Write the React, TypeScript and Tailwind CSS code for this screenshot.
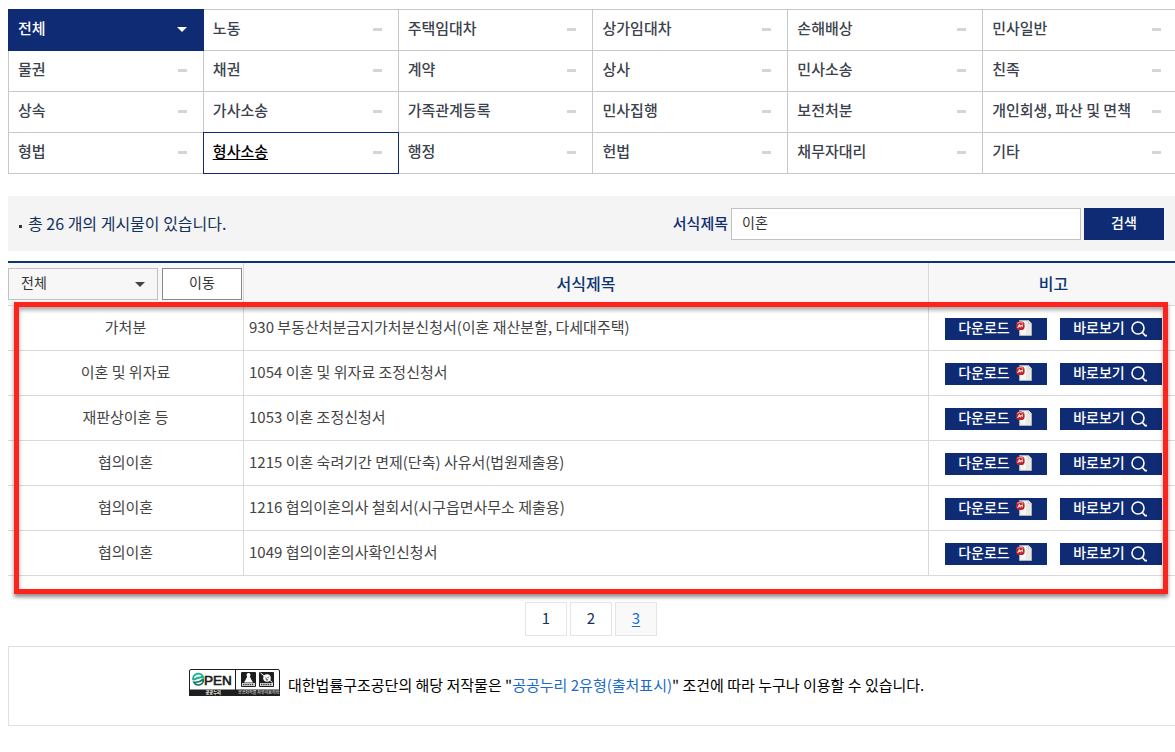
import { useState } from "react";

type FormRow = { category: string; title: string };

const categories = [
  "전체", "노동", "주택임대차", "상가임대차", "손해배상", "민사일반",
  "물권", "채권", "계약", "상사", "민사소송", "친족",
  "상속", "가사소송", "가족관계등록", "민사집행", "보전처분", "개인회생, 파산 및 면책",
  "형법", "형사소송", "행정", "헌법", "채무자대리", "기타",
];

const rows: FormRow[] = [
  { category: "가처분", title: "930 부동산처분금지가처분신청서(이혼 재산분할, 다세대주택)" },
  { category: "이혼 및 위자료", title: "1054 이혼 및 위자료 조정신청서" },
  { category: "재판상이혼 등", title: "1053 이혼 조정신청서" },
  { category: "협의이혼", title: "1215 이혼 숙려기간 면제(단축) 사유서(법원제출용)" },
  { category: "협의이혼", title: "1216 협의이혼의사 철회서(시구읍면사무소 제출용)" },
  { category: "협의이혼", title: "1049 협의이혼의사확인신청서" },
];

function Caret({ className }: { className: string }) {
  return (
    <svg viewBox="0 0 10 5" className={className} aria-hidden="true">
      <path d="M0 0h10L5 5z" fill="currentColor" />
    </svg>
  );
}

function FileIcon() {
  return (
    <svg viewBox="0 0 16 16" className="h-4 w-4" aria-hidden="true">
      <path d="M3.5.5h9l3 3v12h-12z" fill="#e9e9e6" stroke="#c3beb4" strokeWidth=".8" />
      <path d="M5 1.500h5v13H5z" fill="#f6f6f4" />
      <path d="M12.500.5v3h3z" fill="#fff" stroke="#bbb" strokeWidth=".6" />
      <rect x="0" y="1.500" width="8.600" height="8.600" rx="3.400" fill="#b9242b" />
      <path d="M1.200 3.600Q4.300.8 7.400 3.600" stroke="#dd8a8c" strokeWidth="1.300" fill="none" />
      <path d="M1.600 8 3.400 4.400 4.600 7.400M2.600 6.800l4-1.800M6.200 4.600v2.600" stroke="#fff" strokeWidth=".9" fill="none" />
    </svg>
  );
}

function SearchIcon() {
  return (
    <svg viewBox="0 0 16 16" className="h-4 w-4" fill="none" stroke="#fff" aria-hidden="true">
      <circle cx="7" cy="7" r="6" strokeWidth="1.6" />
      <path d="m11 11 3.200 3.600h1.800" strokeWidth="1.600" />
    </svg>
  );
}

function OpenLicenseMark() {
  return (
    <svg viewBox="0 0 91 27" className="h-[27px] w-[91px] shrink-0" role="img" aria-label="OPEN 공공누리">
      <rect x=".5" y=".5" width="90" height="26" rx="1.5" fill="#fff" stroke="#1e1e1e" />
      <path d="M0 20.500h91V27H0z" fill="#1e1e1e" />
      <path d="M46.500 0v21" stroke="#1e1e1e" />
      <path d="M4.300 11a5 5 0 0 1 9.800-2.500q-4.500-.8-9.800 2.500" fill="none" stroke="#12b28c" strokeWidth="2" />
      <path d="M14.300 10.200a5 5 0 0 1-9.400 3q5.500.6 9.400-3" fill="none" stroke="#15735f" strokeWidth="1.600" />
      <text x="15" y="15.800" fontFamily="Liberation Sans, sans-serif" fontSize="13.500" fill="#1e1e1e" stroke="#1e1e1e" strokeWidth=".7">PEN</text>
      <rect x="52" y="3" width="15" height="15" rx="1" fill="#1e1e1e" />
      <rect x="70" y="3" width="15" height="15" rx="1" fill="#1e1e1e" />
      <path d="M59.500 4a2 2 0 0 1 1.300 3.500l1.700 3.500 1.500 2.500h-9l1.500-2.500 1.700-3.500a2 2 0 0 1 1.300-3.500" fill="#fff" />
      <circle cx="78" cy="9" r="3.800" fill="#fff" />
      <path d="m76 7.500 2 2 2-2m-2 2V12M76.500 10h3" stroke="#1e1e1e" strokeWidth=".8" fill="none" />
      <path d="m71.500 4 12 9.500" stroke="#fff" strokeWidth="1" />
      <path d="M53 14h13v3H53zM71 14h13v3H71z" fill="#ddd" />
      <path d="M54 15.500h11M72 15.500h11" stroke="#444" strokeWidth="1.600" strokeDasharray="1.500 .7" />
      <text x="16.500" y="25.200" fontFamily="Noto Sans CJK KR, sans-serif" fontSize="4.200" fontWeight="700" fill="#fff">공공누리</text>
      <text x="49" y="25.200" fontFamily="Noto Sans CJK KR, sans-serif" fontSize="4" fill="#fff">공공저작물 자유이용허락</text>
    </svg>
  );
}

function CategoryGrid() {
  return (
    <nav aria-label="분류">
      <ul className="grid grid-cols-6 pl-px pt-px">
        {categories.map((name, i) => {
          const all = i === 0;
          const current = name === "형사소송";
          const tone = all
            ? "relative border-[#0f2b74] bg-[#0f2b74] text-white"
            : current
              ? "relative border-[#0f2b74] text-black underline underline-offset-2"
              : "border-[#c8c8c8] text-[#3b424c]";
          return (
            <li key={name} className={`-ml-px -mt-px border ${tone}`}>
              <a href="#" className="flex h-10 items-center justify-between pb-0.5 pl-[9px] pr-4 text-[15px] font-medium leading-5">
                <span className="pb-0.5">{name}</span>
                {all ? <Caret className="h-[5px] w-[10px]" /> : <span className="h-[3px] w-[9px] bg-[#d5d5d5]" />}
              </a>
            </li>
          );
        })}
      </ul>
    </nav>
  );
}

export default function App() {
  const [query, setQuery] = useState("이혼");
  const action = "flex h-[22px] w-[102px] items-center justify-center gap-1.5 bg-[#0f2b74] pr-0.5 text-[14px] font-medium leading-5 text-white";
  const page = "flex h-[34px] w-[42px] items-center justify-center border border-[#e5e5e5] pb-0.5";

  return (
    <div className="overflow-x-clip bg-white font-['Noto_Sans_CJK_KR',sans-serif]">
      <main className="-mr-[3px] pb-6 pl-2 pt-[9px]">
        <CategoryGrid />

        <form className="mt-[22px] flex h-[55px] items-center justify-between bg-[#f4f4f4] pl-[11px] pr-[14px]" onSubmit={(e) => e.preventDefault()}>
          <p className="flex items-center gap-1.5 pb-0.5 text-[16px] leading-6 text-[#13315c]">
            <span className="mt-2 h-[3px] w-[3px] bg-[#333]" />
            총 26 개의 게시물이 있습니다.
          </p>
          <div className="flex items-center">
            <label htmlFor="query" className="mr-[3px] pb-0.5 text-[15px] font-medium leading-5 text-[#0f2b74]">서식제목</label>
            <input
              id="query"
              value={query}
              onChange={(e) => setQuery(e.target.value)}
              className="mr-[3px] h-8 w-[350px] border border-[#c2c2c2] bg-white pb-1 pl-2.5 text-[14px] text-[#333] outline-none"
            />
            <button className="h-8 w-20 bg-[#0f2b74] pb-1 text-[14px] font-medium leading-5 text-white">검색</button>
          </div>
        </form>

        <div className="relative mt-2.5">
          <table className="w-full table-fixed border-separate border-spacing-0 border-t-2 border-[#0d3572] text-[15px] leading-5 text-[#444]">
            <colgroup>
              <col className="w-[236px]" />
              <col />
              <col className="w-[249px]" />
            </colgroup>
            <thead>
              <tr className="h-[43px] bg-[#f7f7f7] text-[16px] text-[#0d3572]">
                <th className="border-b border-r border-[#d9d9d9] p-0 font-normal">
                  <div className="flex gap-1 text-[14px] leading-5 text-[#333]">
                    <div className="relative">
                      <select aria-label="분류 선택" className="h-8 w-[150px] appearance-none border border-[#c2c2c2] bg-[#f7f7f7] pb-1 pl-3 leading-6 outline-none">
                        <option>전체</option>
                      </select>
                      <Caret className="pointer-events-none absolute right-[13px] top-3.5 h-[5px] w-[10px] text-[#444]" />
                    </div>
                    <button type="button" className="h-8 w-20 border border-[#888] bg-white pb-1">이동</button>
                  </div>
                </th>
                <th className="border-b border-r border-[#d9d9d9] p-0 pb-0.5 font-medium">서식제목</th>
                <th className="border-b border-[#d9d9d9] p-0 pb-0.5 font-medium">비고</th>
              </tr>
            </thead>
            <tbody>
              {rows.map((row) => (
                <tr key={row.title} className="h-[45px]">
                  <td className="border-b border-r border-[#d9d9d9] p-0 pb-0.5 text-center">{row.category}</td>
                  <td className="border-b border-r border-[#d9d9d9] p-0 pb-0.5 pl-[5px]">{row.title}</td>
                  <td className="border-b border-[#d9d9d9] p-0 pt-0.5">
                    <div className="flex gap-[13px] pl-4">
                      <a href="#" className={action}>
                        <span className="pb-1">다운로드</span>
                        <span className="pb-0.5"><FileIcon /></span>
                      </a>
                      <a href="#" className={action}>
                        <span className="pb-1">바로보기</span>
                        <SearchIcon />
                      </a>
                    </div>
                  </td>
                </tr>
              ))}
            </tbody>
          </table>
          <div className="pointer-events-none absolute -bottom-[18px] left-1.5 right-[10px] top-[41px] border-[5px] border-[#ff231d] shadow-[0_3px_4px_rgba(0,0,0,0.45),inset_0_3px_4px_rgba(0,0,0,0.35)]" />
        </div>

        <nav aria-label="페이지" className="mt-[26px] flex justify-center gap-[3px] pr-1 text-[15px] leading-5 text-[#13315c]">
          <a href="#" className={page}>1</a>
          <a href="#" className={page}>2</a>
          <a href="#" aria-current="page" className={`${page} bg-[#f9f9f9] text-[#1b6ac9] underline underline-offset-2`}>3</a>
        </nav>

        <footer className="mt-2.5 flex h-20 items-center border border-[#e0e0e0] pl-[180px] text-[15px] leading-5 text-black">
          <div className="pb-2">
            <OpenLicenseMark />
          </div>
          <p className="ml-2 pb-0.5">
            대한법률구조공단의 해당 저작물은 "<a href="#" className="text-[#1b6ac9]">공공누리 2유형(출처표시)</a>" 조건에 따라 누구나 이용할 수 있습니다.
          </p>
        </footer>
      </main>
    </div>
  );
}
